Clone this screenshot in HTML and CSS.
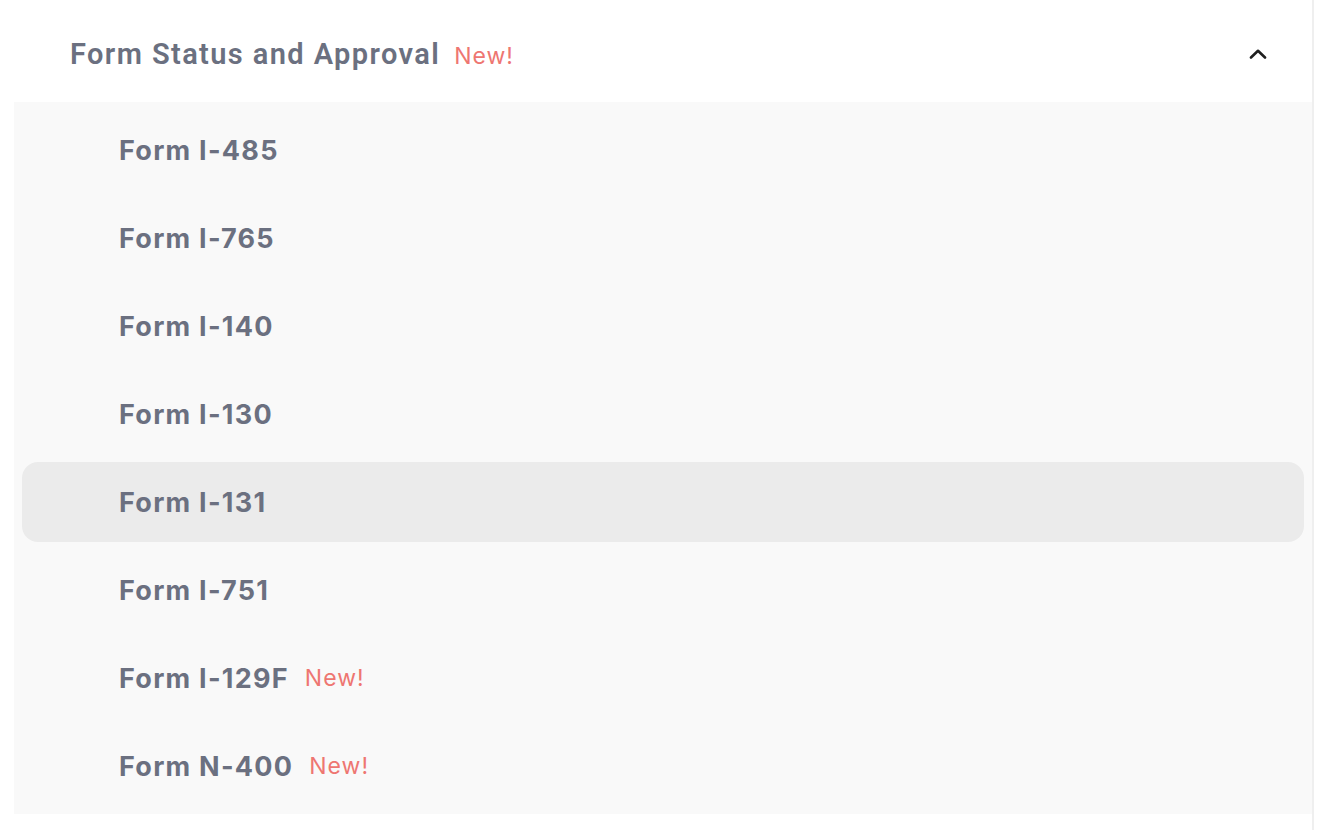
FILE: index.html
```html
<!DOCTYPE html>
<html>
<head>
<meta charset="utf-8">
<link rel="stylesheet" href="styles.css">
</head>
<body>
<div class="panel">
  <div class="section">
    <div class="section-header">
      <div class="section-title">
        <span class="title-text">Form Status and Approval</span>
        <span class="badge-new header-new">New!</span>
      </div>
      <svg class="chevron" width="18" height="10" viewBox="0 0 18 10"><path d="M2 8.5 L9 1.8 L16 8.5" fill="none" stroke="#1f1f1f" stroke-width="2.6" stroke-linecap="round" stroke-linejoin="round"/></svg>
    </div>
    <ul class="items">
      <li class="item"><span class="item-text">Form I-485</span></li>
      <li class="item"><span class="item-text">Form I-765</span></li>
      <li class="item"><span class="item-text">Form I-140</span></li>
      <li class="item"><span class="item-text">Form I-130</span></li>
      <li class="item active"><span class="item-text">Form I-131</span></li>
      <li class="item"><span class="item-text">Form I-751</span></li>
      <li class="item"><span class="item-text">Form I-129F</span><span class="badge-new">New!</span></li>
      <li class="item"><span class="item-text">Form N-400</span><span class="badge-new">New!</span></li>
    </ul>
  </div>
</div>
</body>
</html>
```

FILE: styles.css
```css
html, body {
  margin: 0;
  padding: 0;
  background: #ffffff;
}
body {
  font-family: Inter, "Noto Sans", sans-serif;
}
.panel {
  width: 1312px;
  height: 830px;
  border-right: 2px solid #efefef;
  box-sizing: content-box;
}
.section {
  padding-left: 14px;
}
.section-header {
  height: 102px;
  box-sizing: border-box;
  padding-top: 6px;
  display: flex;
  align-items: center;
  justify-content: space-between;
  padding-left: 56px;
  padding-right: 45px;
}
.section-title {
  display: flex;
  align-items: baseline;
  gap: 14px;
}
.title-text {
  font-family: Roboto, "Liberation Sans", sans-serif;
  font-weight: 600;
  font-size: 29px;
  letter-spacing: 1.4px;
  color: #6b7080;
}
.badge-new {
  font-family: Inter, "Noto Sans", sans-serif;
  font-weight: 400;
  font-size: 23px;
  color: #ee7671;
  letter-spacing: 1px;
}
.chevron {
  display: block;
}
.items {
  list-style: none;
  margin: 0;
  padding: 8px;
  background: #f9f9f9;
  display: flex;
  flex-direction: column;
  gap: 8px;
}
.item {
  height: 80px;
  display: flex;
  align-items: center;
  gap: 16px;
  padding-left: 97px;
  border-radius: 16px;
}
.item.active {
  background: #ebebeb;
}
.item-text {
  font-weight: 700;
  font-size: 27px;
  color: #6b7080;
  letter-spacing: 1.25px;
}
```
